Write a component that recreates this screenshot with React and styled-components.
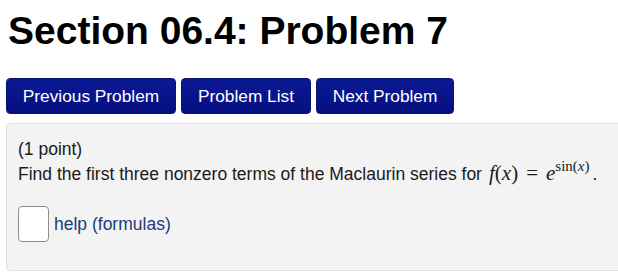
import styled, { createGlobalStyle } from 'styled-components'

const GlobalStyle = createGlobalStyle`
  body {
    margin: 0;
    background: #fff;
    font-family: "Liberation Sans", Arial, sans-serif;
    overflow: hidden;
  }
`

const Page = styled.div`
  padding: 0 0 0 6px;
  width: 640px;
`

const Title = styled.h1`
  font-size: 39px;
  font-weight: bold;
  margin: 0;
  padding: 8px 0 0 2px;
  line-height: 46px;
  color: #000;
`

const Nav = styled.div`
  display: flex;
  gap: 5px;
  margin-top: 24px;
`

const NavButton = styled.button`
  width: ${({ w }) => w}px;
  height: 36px;
  padding: 0;
  border: 1px solid #0a1470;
  border-radius: 4px;
  background: linear-gradient(#0c1a94, #050f80);
  color: #fff;
  font-family: "Liberation Sans", Arial, sans-serif;
  font-size: 17.3px;
`

const Panel = styled.div`
  margin-top: 9px;
  height: 148px;
  box-sizing: border-box;
  background: #f3f3f3;
  border: 1px solid #e0e0e0;
  border-radius: 4px;
  padding: 13px 11px;
  font-size: 17.5px;
  color: #1a1a1a;
`

const Line = styled.div`
  line-height: 24px;
`

const Math = styled.span`
  font-family: "Liberation Serif", "Times New Roman", serif;
  font-size: 21px;
  margin: 0 3px 0 7px;
`

const Var = styled.i`
  font-style: italic;
`

const Eq = styled.span`
  margin: 0 8px;
`

const Sup = styled.sup`
  font-size: 15px;
  vertical-align: 9px;
  line-height: 0;
`

const AnswerRow = styled.div`
  display: flex;
  align-items: center;
  gap: 5px;
  margin-top: 20px;
`

const AnswerBox = styled.div`
  width: 29px;
  height: 34px;
  background: #fff;
  border: 1px solid #8c8c8c;
  border-radius: 4px;
`

const HelpLink = styled.a`
  color: #1d3b7a;
  text-decoration: none;
  font-size: 17.5px;
`

const App = () => (
  <>
    <GlobalStyle />
    <Page>
      <Title>Section 06.4: Problem 7</Title>
      <Nav>
        <NavButton w={170}>Previous Problem</NavButton>
        <NavButton w={130}>Problem List</NavButton>
        <NavButton w={138}>Next Problem</NavButton>
      </Nav>
      <Panel>
        <Line>(1 point)</Line>
        <Line>
          Find the first three nonzero terms of the Maclaurin series for
          <Math>
            <Var>f</Var>(<Var>x</Var>)<Eq>=</Eq>
            <Var>e</Var>
            <Sup>
              sin(<Var>x</Var>)
            </Sup>
          </Math>
          .
        </Line>
        <AnswerRow>
          <AnswerBox />
          <HelpLink href="#">help (formulas)</HelpLink>
        </AnswerRow>
      </Panel>
    </Page>
  </>
)

export default App
